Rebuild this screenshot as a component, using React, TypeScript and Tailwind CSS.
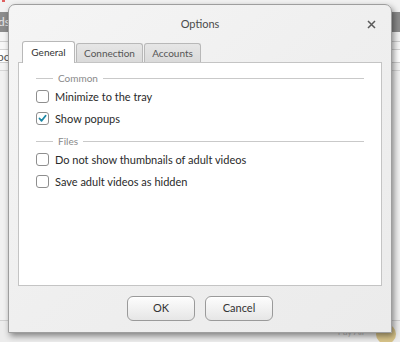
import React from "react";

function Legend({ label }: { label: string }) {
  return (
    <div className="flex items-center h-[14px]">
      <div className="w-[17px] h-px bg-[#c9c9c9]" />
      <span className="px-[5px] text-[10px] leading-none text-[#8a8a8a]">{label}</span>
      <div className="flex-1 h-px bg-[#c9c9c9]" />
    </div>
  );
}

function Check({ label, checked, h }: { label: string; checked?: boolean; h: string }) {
  return (
    <div className={"flex items-center " + h}>
      <div className="w-[13px] h-[13px] rounded-[3px] border border-[#8e8e8e] bg-white flex items-center justify-center">
        {checked && (
          <svg width="9" height="9" viewBox="0 0 9 9">
            <path d="M1.5 4.5 L3.6 6.8 L7.6 1.8" fill="none" stroke="#1b87a6" strokeWidth="1.8" strokeLinecap="round" strokeLinejoin="round" />
          </svg>
        )}
      </div>
      <span className="ml-[6px] text-[11px] leading-none text-[#2a2a2a]">{label}</span>
    </div>
  );
}

function Btn({ label }: { label: string }) {
  return (
    <div className="w-[68px] h-[25px] rounded-[6px] border border-[#9a9a9a] bg-gradient-to-b from-[#fdfdfd] to-[#e6e6e6] flex items-center justify-center text-[11px] text-[#333] shadow-[inset_0_1px_0_#fff]">
      {label}
    </div>
  );
}

export default function App() {
  return (
    <div
      className="relative w-[400px] h-[342px] overflow-hidden bg-[#ececec]"
      style={{ fontFamily: 'Lato, "Open Sans", sans-serif' }}
    >
      {/* background app */}
      <div className="flex flex-col w-full">
        <div className="h-[12px] bg-[#f2f2f2] relative">
          <div className="absolute left-[2px] top-0 w-[3px] h-[2px] bg-[#e06060]" />
        </div>
        <div className="h-[20px] bg-[#8c8c8c] text-[12px] text-[#e6e6e6] leading-[20px]">
          <span className="-ml-[2px]">ds</span>
        </div>
        <div className="h-[10px] bg-[#f4f4f4] border-b border-[#cfcfcf]" />
        <div className="h-[8px] bg-[#f7f7f7] border-b border-[#d4d4d4]" />
        <div className="h-[13px] bg-white border-b border-[#cfcfcf] text-[12px] leading-[13px] text-[#555]">
          <span className="-ml-[3px]">po</span>
        </div>
        <div className="h-[8px] bg-[#f4f4f4] border-b border-[#d6d6d6]" />
        <div className="h-[250px] bg-[#f1f1f1] border-b border-[#d0d0d0]" />
        <div className="flex items-start justify-end h-[20px] pr-[4px] pt-[2px] gap-[12px]">
          <span className="text-[9px] text-[#bbb] mt-[2px]">Pay All</span>
          <div className="w-[20px] h-[20px] rounded-full bg-[#d8c48a] mt-[1px]" />
        </div>
      </div>

      {/* dialog */}
      <div className="absolute left-[8px] top-[4px] w-[384px] h-[329px] rounded-t-[7px] border border-[#9e9e9e] bg-gradient-to-br from-[#f5f5f5] via-[#efefef] to-[#ebebeb] shadow-[2px_3px_6px_rgba(0,0,0,0.45)] flex flex-col">
        <div className="h-[35px] flex items-center justify-center relative">
          <span className="text-[11px] text-[#4a4a4a] mt-[3px]">Options</span>
          <svg className="absolute right-[15px] top-[15px]" width="9" height="9" viewBox="0 0 9 9">
            <path d="M1 1 L8 8 M8 1 L1 8" stroke="#5a5a5a" strokeWidth="1.5" />
          </svg>
        </div>
        <div className="flex items-end pl-[13px] h-[22px] relative z-10">
          <div className="h-[22px] w-[53px] bg-white border border-b-0 border-[#b8b8b8] rounded-t-[3px] flex items-center justify-center text-[10px] text-[#333] -mb-px">
            General
          </div>
          <div className="h-[19px] w-[67px] ml-[1px] bg-gradient-to-b from-[#e6e6e6] to-[#dadada] border border-b-0 border-[#b8b8b8] rounded-t-[3px] flex items-center justify-center text-[10px] text-[#555]">
            Connection
          </div>
          <div className="h-[19px] w-[57px] ml-[1px] bg-gradient-to-b from-[#e6e6e6] to-[#dadada] border border-b-0 border-[#b8b8b8] rounded-t-[3px] flex items-center justify-center text-[10px] text-[#555]">
            Accounts
          </div>
        </div>
        <div className="mx-[9px] h-[224px] bg-white border border-[#c4c4c4] px-[17px] pt-[8px]">
          <Legend label="Common" />
          <div className="mt-[1px]">
            <Check label="Minimize to the tray" h="h-[21px]" />
            <Check label="Show popups" checked h="h-[22px]" />
          </div>
          <div className="mt-[5px]">
            <Legend label="Files" />
          </div>
          <div>
            <Check label="Do not show thumbnails of adult videos" h="h-[22px]" />
            <Check label="Save adult videos as hidden" h="h-[22px]" />
          </div>
        </div>
        <div className="flex justify-center gap-[10px] mt-[10px]">
          <Btn label="OK" />
          <Btn label="Cancel" />
        </div>
      </div>
    </div>
  );
}
